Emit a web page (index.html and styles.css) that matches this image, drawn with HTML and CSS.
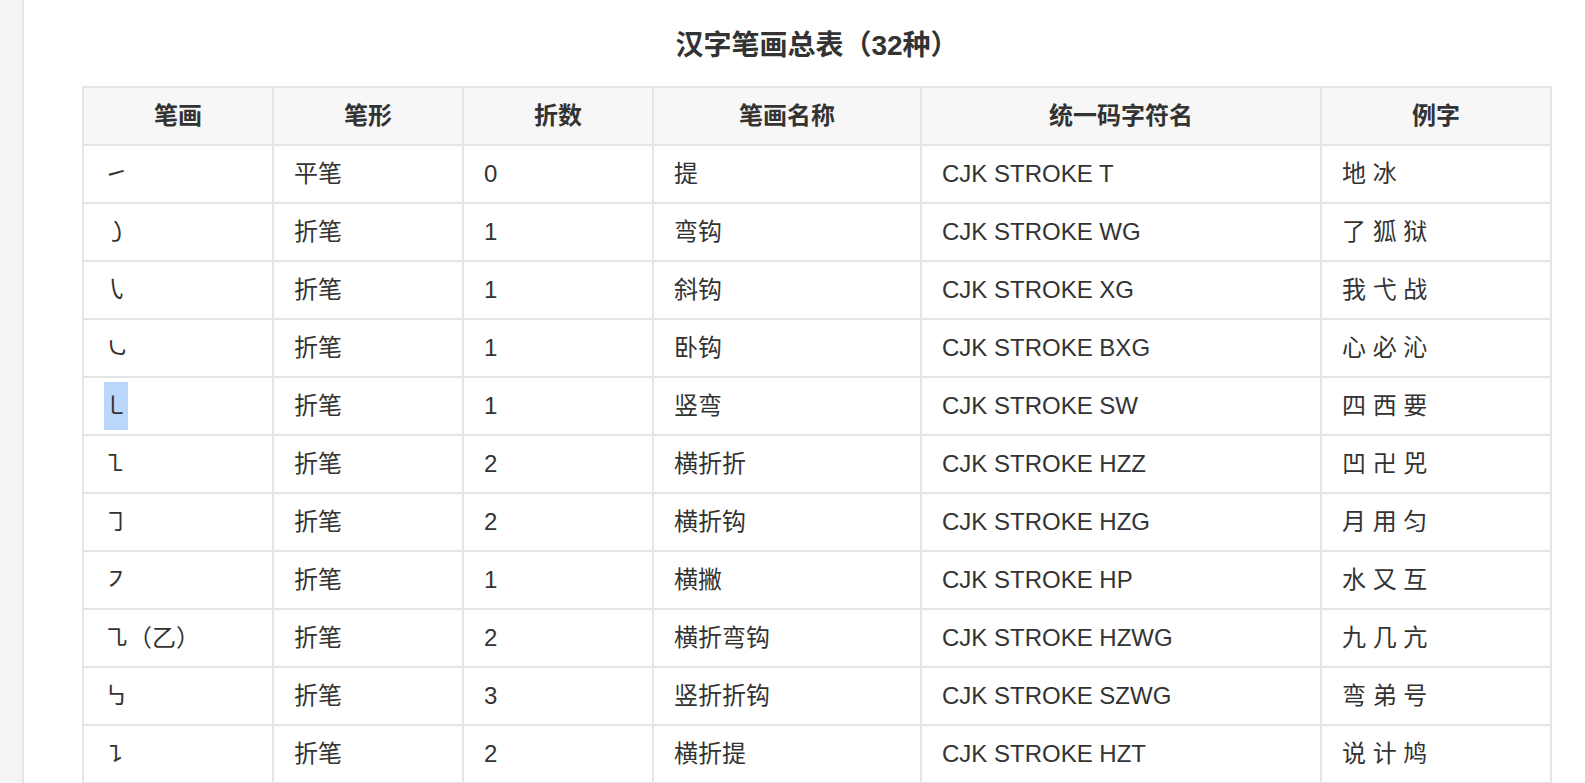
FILE: index.html
```html
<!DOCTYPE html>
<html lang="zh-CN">
<head>
<meta charset="utf-8">
<title>汉字笔画总表</title>
<link rel="stylesheet" href="styles.css">
</head>
<body>
<aside class="side"></aside>
<main class="content">
  <h3 class="title">汉字笔画总表（32种）</h3>
  <table class="strokes">
    <thead>
      <tr>
        <th class="c1">笔画</th>
        <th class="c2">笔形</th>
        <th class="c3">折数</th>
        <th class="c4">笔画名称</th>
        <th class="c5">统一码字符名</th>
        <th class="c6">例字</th>
      </tr>
    </thead>
    <tbody>
      <tr><td>㇀</td><td>平笔</td><td>0</td><td>提</td><td>CJK STROKE T</td><td>地 冰</td></tr>
      <tr><td>㇁</td><td>折笔</td><td>1</td><td>弯钩</td><td>CJK STROKE WG</td><td>了 狐 狱</td></tr>
      <tr><td>㇂</td><td>折笔</td><td>1</td><td>斜钩</td><td>CJK STROKE XG</td><td>我 弋 战</td></tr>
      <tr><td>㇃</td><td>折笔</td><td>1</td><td>卧钩</td><td>CJK STROKE BXG</td><td>心 必 沁</td></tr>
      <tr><td><span class="sel">㇄</span></td><td>折笔</td><td>1</td><td>竖弯</td><td>CJK STROKE SW</td><td>四 西 要</td></tr>
      <tr><td>㇅</td><td>折笔</td><td>2</td><td>横折折</td><td>CJK STROKE HZZ</td><td>凹 卍 兕</td></tr>
      <tr><td>㇆</td><td>折笔</td><td>2</td><td>横折钩</td><td>CJK STROKE HZG</td><td>月 用 匀</td></tr>
      <tr><td>㇇</td><td>折笔</td><td>1</td><td>横撇</td><td>CJK STROKE HP</td><td>水 又 互</td></tr>
      <tr><td>㇈（乙）</td><td>折笔</td><td>2</td><td>横折弯钩</td><td>CJK STROKE HZWG</td><td>九 几 亢</td></tr>
      <tr><td>㇉</td><td>折笔</td><td>3</td><td>竖折折钩</td><td>CJK STROKE SZWG</td><td>弯 弟 号</td></tr>
      <tr><td>㇊</td><td>折笔</td><td>2</td><td>横折提</td><td>CJK STROKE HZT</td><td>说 计 鸠</td></tr>
    </tbody>
  </table>
</main>
</body>
</html>
```

FILE: styles.css
```css
html {
  overflow: hidden;
}

body {
  margin: 0;
  display: flex;
  min-height: 100vh;
  background: #ffffff;
  color: #333333;
  font-family: "Liberation Sans", "Noto Sans CJK SC", sans-serif;
  font-size: 24px;
}

.side {
  width: 22px;
  flex: none;
  background: #f4f4f4;
  border-right: 2px solid #e6e6e6;
}

.content {
  flex: 1;
  padding: 26px 33px 0 58px;
}

.title {
  margin: 0 0 20px;
  width: 1470px;
  text-align: center;
  font-size: 28px;
  font-weight: bold;
  line-height: 40px;
  color: #333333;
}

.strokes {
  width: 1470px;
  table-layout: fixed;
  border-collapse: separate;
  border-spacing: 0;
  border-left: 2px solid #e5e5e5;
  border-top: 2px solid #e5e5e5;
  box-sizing: border-box;
}

.strokes th,
.strokes td {
  box-sizing: border-box;
  height: 58px;
  padding: 4px 20px;
  line-height: 48px;
  border-right: 2px solid #e5e5e5;
  border-bottom: 2px solid #e5e5e5;
  vertical-align: middle;
  white-space: nowrap;
}

.strokes th {
  background: #f7f7f7;
  font-weight: bold;
  text-align: center;
}

.strokes td {
  text-align: left;
  font-weight: normal;
}

.c1 { width: 190px; }
.c2 { width: 190px; }
.c3 { width: 190px; }
.c4 { width: 268px; }
.c5 { width: 400px; }
.c6 { width: 230px; }

.sel {
  display: inline-block;
  height: 48px;
  line-height: 48px;
  background: #bbd6fb;
}
```
